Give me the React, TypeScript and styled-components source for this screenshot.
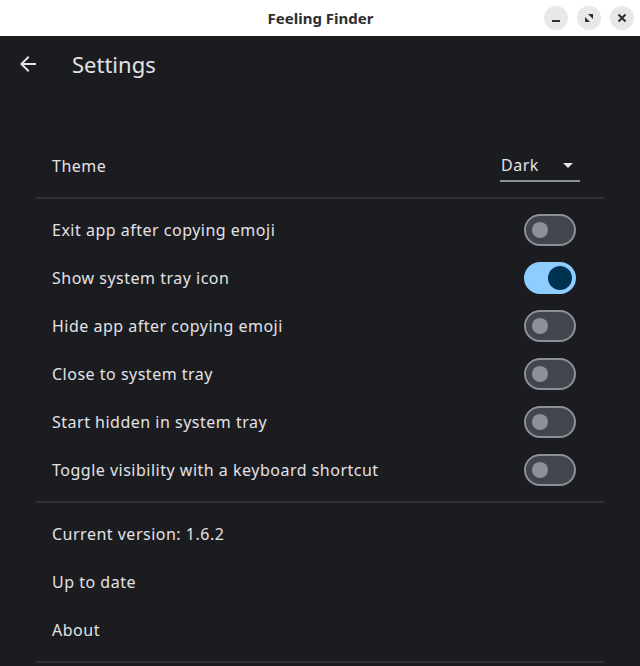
import React from "react";
import styled, { createGlobalStyle } from "styled-components";

const Global = createGlobalStyle`
  html, body { margin: 0; padding: 0; background: #1b1c1f; }
  body { font-family: "Noto Sans", "DejaVu Sans", sans-serif; }
  * { box-sizing: border-box; }
`;

const Window = styled.div`
  width: 640px;
  height: 666px;
  display: flex;
  flex-direction: column;
  background: #1b1c1f;
  overflow: hidden;
`;

const TitleBar = styled.div`
  height: 36px;
  flex: none;
  background: #ffffff;
  display: grid;
  grid-template-columns: 1fr auto 1fr;
  align-items: center;
  padding: 0 6px 0 12px;
`;

const Title = styled.div`
  grid-column: 2;
  font-size: 15px;
  font-weight: 700;
  color: #2e2e2e;
  margin-left: -5px;
`;

const WinButtons = styled.div`
  grid-column: 3;
  justify-self: end;
  display: flex;
  gap: 9px;
`;

const WinButton = styled.div`
  width: 24px;
  height: 24px;
  border-radius: 50%;
  background: #e8e8e8;
  display: flex;
  align-items: center;
  justify-content: center;
  color: #2e2e2e;
`;

const AppBar = styled.div`
  height: 56px;
  flex: none;
  display: flex;
  align-items: center;
  padding: 0 0 0 16px;
  gap: 32px;
`;

const BackIcon = styled.div`
  width: 24px;
  height: 24px;
  display: flex;
  align-items: center;
  justify-content: center;
  color: #e3e2e6;
`;

const AppTitle = styled.div`
  font-size: 22px;
  color: #e3e2e6;
  margin-top: -1px;
`;

const Content = styled.div`
  padding: 50px 36px 0;
  display: flex;
  flex-direction: column;
`;

const Row = styled.div`
  height: 48px;
  display: flex;
  align-items: center;
  justify-content: space-between;
  padding: 0 28px 0 16px;
`;

const Label = styled.div`
  font-size: 16px;
  color: #e3e2e6;
  letter-spacing: 0.5px;
`;

const Divider = styled.div<{ $after?: number }>`
  height: 2px;
  background: #2f3034;
  margin: 7px 0 ${(p) => p.$after ?? 8}px;
`;

const Select = styled.div`
  width: 80px;
  height: 32px;
  margin-right: -4px;
  margin-top: -1px;
  border-bottom: 2px solid #8e9099;
  display: flex;
  align-items: center;
  justify-content: space-between;
  padding: 1px 7px 0 1px;
`;

const SelectText = styled.span`
  font-size: 16px;
  color: #e3e2e6;
  letter-spacing: 0.5px;
`;

const Track = styled.div<{ $on: boolean }>`
  width: 52px;
  height: 32px;
  border-radius: 16px;
  border: 2px solid ${(p) => (p.$on ? "#8ecdff" : "#8e9099")};
  background: ${(p) => (p.$on ? "#8ecdff" : "#42454d")};
  display: flex;
  align-items: center;
  justify-content: ${(p) => (p.$on ? "flex-end" : "flex-start")};
  padding: 0 ${(p) => (p.$on ? "2px" : "6px")};
`;

const Thumb = styled.div<{ $on: boolean }>`
  width: ${(p) => (p.$on ? "24px" : "16px")};
  height: ${(p) => (p.$on ? "24px" : "16px")};
  border-radius: 50%;
  background: ${(p) => (p.$on ? "#003352" : "#8e9099")};
`;

const Switch = ({ on }: { on: boolean }) => (
  <Track $on={on}>
    <Thumb $on={on} />
  </Track>
);

const toggles: [string, boolean][] = [
  ["Exit app after copying emoji", false],
  ["Show system tray icon", true],
  ["Hide app after copying emoji", false],
  ["Close to system tray", false],
  ["Start hidden in system tray", false],
  ["Toggle visibility with a keyboard shortcut", false],
];

export default function App() {
  return (
    <Window>
      <Global />
      <TitleBar>
        <Title>Feeling Finder</Title>
        <WinButtons>
          <WinButton>
            <svg width="10" height="10" viewBox="0 0 10 10">
              <rect x="1" y="7" width="8" height="2" fill="currentColor" />
            </svg>
          </WinButton>
          <WinButton>
            <svg width="10" height="10" viewBox="0 0 10 10" fill="currentColor">
              <path d="M4 1h5v5z" />
              <path d="M1 4v5h5z" />
            </svg>
          </WinButton>
          <WinButton>
            <svg width="10" height="10" viewBox="0 0 10 10">
              <path d="M1.5 1.5l7 7M8.5 1.5l-7 7" stroke="currentColor" strokeWidth="2" />
            </svg>
          </WinButton>
        </WinButtons>
      </TitleBar>
      <AppBar>
        <BackIcon>
          <svg width="24" height="24" viewBox="0 0 24 24" fill="currentColor">
            <path d="M20 11H7.83l5.59-5.59L12 4l-8 8 8 8 1.41-1.41L7.83 13H20v-2z" />
          </svg>
        </BackIcon>
        <AppTitle>Settings</AppTitle>
      </AppBar>
      <Content>
        <Row>
          <Label>Theme</Label>
          <Select>
            <SelectText>Dark</SelectText>
            <svg width="10" height="5" viewBox="0 0 10 5">
              <path d="M0 0h10L5 5z" fill="#e3e2e6" />
            </svg>
          </Select>
        </Row>
        <Divider $after={7} />
        {toggles.map(([label, on]) => (
          <Row key={label}>
            <Label>{label}</Label>
            <Switch on={on} />
          </Row>
        ))}
        <Divider $after={7} />
        <Row>
          <Label>Current version: 1.6.2</Label>
        </Row>
        <Row>
          <Label>Up to date</Label>
        </Row>
        <Row>
          <Label>About</Label>
        </Row>
        <Divider />
      </Content>
    </Window>
  );
}
